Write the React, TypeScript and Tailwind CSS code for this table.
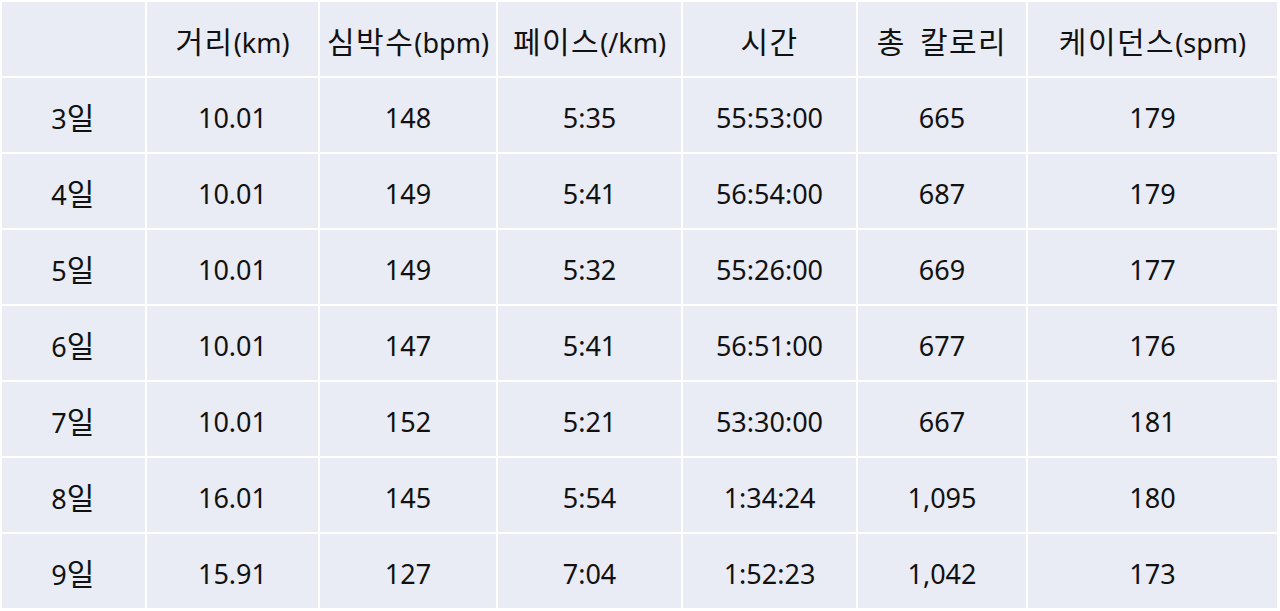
import React from "react";

const header = ["", "거리(km)", "심박수(bpm)", "페이스(/km)", "시간", "총 칼로리", "케이던스(spm)"];
const rows = [
  ["3일", "10.01", "148", "5:35", "55:53:00", "665", "179"],
  ["4일", "10.01", "149", "5:41", "56:54:00", "687", "179"],
  ["5일", "10.01", "149", "5:32", "55:26:00", "669", "177"],
  ["6일", "10.01", "147", "5:41", "56:51:00", "677", "176"],
  ["7일", "10.01", "152", "5:21", "53:30:00", "667", "181"],
  ["8일", "16.01", "145", "5:54", "1:34:24", "1,095", "180"],
  ["9일", "15.91", "127", "7:04", "1:52:23", "1,042", "173"],
];

function Text({ s }: { s: string }) {
  const parts = s.match(/[\uAC00-\uD7A3]+|[^\uAC00-\uD7A3]+/g) || [];
  return (
    <span className="whitespace-pre">
      {parts.map((p, i) =>
        /[\uAC00-\uD7A3]/.test(p) ? (
          <span key={i} className="text-[30px] tracking-[1.5px]">
            {p}
          </span>
        ) : (
          <span key={i}>{p === " " ? "  " : p}</span>
        )
      )}
    </span>
  );
}

export default function App() {
  const all = [header, ...rows];
  return (
    <div className="w-[1280px] h-[611px] bg-white pt-[2px] pl-[2px] pr-[3px] overflow-hidden">
      <div
        className="grid grid-cols-[143px_171px_176px_183px_173px_168px_1fr] auto-rows-[74px] gap-[2px] text-[27px] text-[#111]"
        style={{ fontFamily: '"Noto Sans", "Noto Sans CJK KR", sans-serif' }}
      >
        {all.map((r, i) =>
          r.map((c, j) => (
            <div
              key={`${i}-${j}`}
              className="bg-[#e9ebf5] flex items-center justify-center pt-[5px] leading-none whitespace-nowrap"
            >
              <Text s={c} />
            </div>
          ))
        )}
      </div>
    </div>
  );
}
